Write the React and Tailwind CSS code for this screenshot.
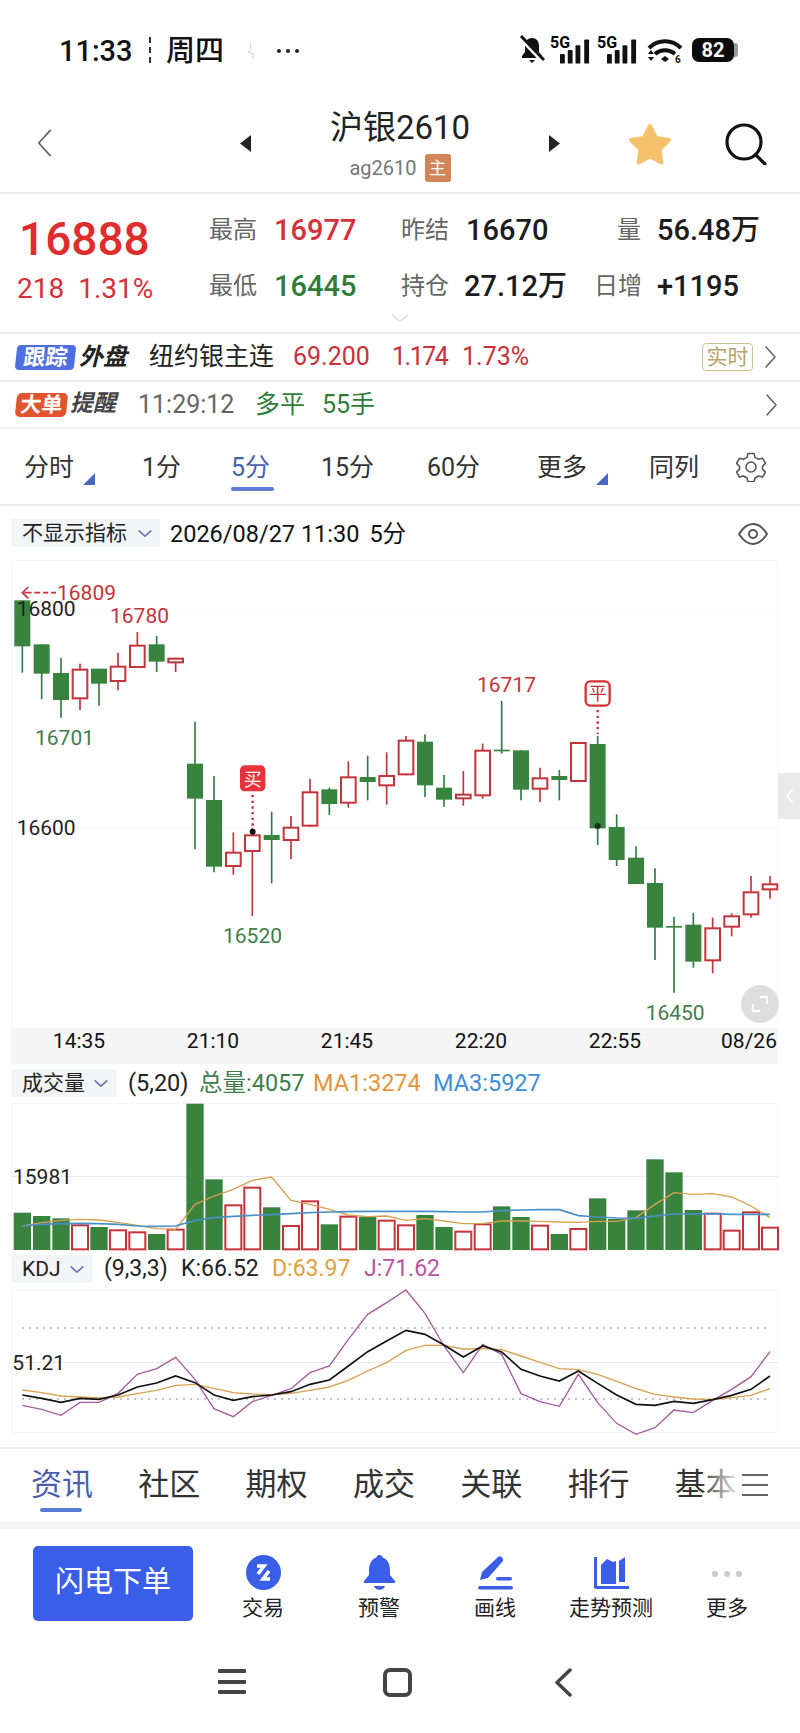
import React from 'react';

const RED = '#c2333a';
const GREEN = '#38843f';

// chart data is in 3x reference pixels: [centerX, up, bodyTop, bodyBottom, wickTop, wickBottom]
const candles = [
  [64, 0, 118, 256, 118, 335], [122, 0, 250, 338, 250, 415], [180, 0, 336, 417, 291, 470],
  [237, 1, 323, 415, 308, 447], [294, 0, 323, 368, 323, 434], [351, 1, 314, 363, 275, 388],
  [409, 1, 251, 321, 213, 321], [467, 0, 250, 302, 225, 333], [524, 1, 290, 307, 290, 333],
  [582, 0, 608, 713, 482, 865], [639, 0, 717, 917, 646, 934], [697, 1, 872, 918, 814, 941],
  [754, 1, 820, 873, 800, 1065], [812, 0, 822, 837, 752, 967], [870, 1, 797, 840, 765, 894],
  [927, 1, 691, 797, 653, 797], [985, 0, 685, 729, 680, 762], [1042, 1, 646, 728, 601, 740],
  [1100, 0, 648, 663, 584, 718], [1157, 1, 642, 676, 574, 731], [1215, 1, 536, 643, 525, 643],
  [1272, 0, 542, 673, 520, 708], [1329, 0, 680, 716, 642, 737], [1387, 1, 698, 715, 630, 734],
  [1445, 1, 566, 706, 548, 713], [1502, 0, 566, 571, 420, 578], [1560, 0, 568, 686, 568, 718],
  [1617, 1, 649, 686, 620, 723], [1675, 0, 645, 657, 627, 718], [1732, 1, 543, 663, 543, 663],
  [1790, 0, 549, 802, 525, 852], [1847, 0, 798, 897, 760, 915], [1905, 0, 890, 969, 856, 969],
  [1962, 0, 966, 1100, 922, 1197], [2019, 0, 1095, 1100, 1067, 1295], [2077, 0, 1091, 1202, 1056, 1220],
  [2135, 1, 1099, 1201, 1070, 1237], [2192, 1, 1063, 1100, 1057, 1126], [2250, 1, 991, 1063, 945, 1070],
  [2307, 1, 967, 988, 945, 1013],
];

const volumeTops = [
  455, 465, 472, 490, 498, 505, 511, 519, 503, 128, 355, 430, 377, 439, 492, 418, 490, 464, 467, 476,
  490, 462, 498, 509, 487, 436, 468, 491, 519, 501, 412, 474, 448, 295, 334, 447, 455, 506, 451, 497,
];

const xs = candles.map((c) => c[0]);
const line = (ys) => ys.map((y, i) => `${xs[i]},${y}`).join(' ');

const ma1 = [495, 485, 478, 475, 477, 484, 493, 503, 505, 430, 405, 385, 358, 348, 418, 430, 445, 462, 467, 465, 478, 473, 480, 488, 488, 480, 480, 481, 483, 484, 481, 481, 470, 430, 395, 400, 398, 408, 435, 470];
const ma3 = [495, 490, 488, 487, 488, 490, 495, 496, 495, 478, 470, 466, 463, 461, 458, 455, 453, 452, 451, 451, 451, 451, 452, 453, 453, 449, 447, 446, 446, 464, 468, 471, 472, 465, 459, 459, 458, 460, 460, 460];
const kLine = [1002, 1012, 1024, 1012, 1015, 1002, 978, 966, 945, 965, 1002, 1018, 1007, 1002, 992, 970, 957, 915, 872, 840, 808, 820, 852, 888, 855, 873, 925, 945, 960, 930, 967, 1002, 1030, 1033, 1021, 1027, 1016, 1003, 985, 945];
const dLine = [987, 995, 1005, 1008, 1011, 1008, 998, 988, 973, 970, 982, 995, 999, 1001, 997, 988, 978, 958, 930, 905, 868, 853, 853, 864, 863, 866, 885, 904, 923, 926, 940, 961, 983, 1000, 1008, 1014, 1016, 1010, 1003, 983];
const jLine = [1033, 1045, 1063, 1024, 1024, 997, 940, 923, 889, 955, 1043, 1067, 1022, 1003, 983, 935, 915, 835, 760, 725, 687, 757, 855, 935, 850, 880, 998, 1022, 1036, 940, 1025, 1087, 1120, 1100, 1047, 1055, 1018, 985, 947, 872];

function Chevron({ className = '', dir = 'right', color = '#555', w = 2 }) {
  const d = { right: 'M3 2l9 10-9 10', left: 'M12 2L3 12l9 10', down: 'M2 3l10 9 10-9' }[dir];
  return (
    <svg viewBox={dir === 'down' ? '0 0 24 15' : '0 0 15 24'} className={className} fill="none" stroke={color} strokeWidth={w} strokeLinecap="round" strokeLinejoin="round">
      <path d={d} />
    </svg>
  );
}

function Signal() {
  return (
    <div className="relative w-[41px] h-[28px]">
      <span className="absolute left-0 top-0 text-[16px] leading-[13px] font-bold text-black">5G</span>
      <svg viewBox="0 0 32 25" className="absolute right-0 top-[3px] w-[31px] h-[25px]" fill="#111">
        <rect x="0" y="15" width="5" height="10" rx="1" />
        <rect x="8" y="11" width="5" height="14" rx="1" />
        <rect x="16" y="6" width="5" height="19" rx="1" />
        <rect x="25" y="0" width="5" height="25" rx="1" />
      </svg>
    </div>
  );
}

function StatusBar() {
  return (
    <div className="h-[96px] shrink-0 flex items-start pt-[33px] pl-[59px]">
      <span className="w-[74px] text-[29px] leading-[36px] font-medium text-[#111] whitespace-nowrap">11:33</span>
      <span className="ml-[16px] mt-[4px] h-[26px] border-l-2 border-dashed border-[#333]" />
      <span className="ml-[15px] w-[58px] text-[29px] leading-[36px] font-medium text-[#111] whitespace-nowrap">周四</span>
      <svg viewBox="0 0 16 20" className="ml-[19px] mt-[8px] w-[16px] h-[20px]" fill="none" stroke="#c6d3e6" strokeWidth="1">
        <path d="M7 2l1 6-3 3 6 2-2 5" />
      </svg>
      <span className="ml-[18px] mt-[16px] flex gap-[5px]">
        <i className="w-[4px] h-[4px] rounded-full bg-[#222]" />
        <i className="w-[4px] h-[4px] rounded-full bg-[#222]" />
        <i className="w-[4px] h-[4px] rounded-full bg-[#222]" />
      </span>
      <svg viewBox="0 0 26 28" className="ml-[220px] w-[26px] h-[28px] mt-[2px]" fill="#111">
        <path d="M13 3c-5 0-7 4-7 8v6l-3 4v2h20v-2l-3-4v-6c0-4-2-8-7-8z" />
        <path d="M10 25h6l-3 3z" />
        <path d="M1 2l23 24" stroke="#fff" strokeWidth="5" />
        <path d="M2 1l23 24" stroke="#111" strokeWidth="3" />
      </svg>
      <div className="ml-[5px] mt-[3px]"><Signal /></div>
      <div className="ml-[6px] mt-[3px]"><Signal /></div>
      <svg viewBox="0 0 36 24" className="ml-[9px] mt-[6px] w-[36px] h-[24px]" fill="none">
        <path d="M2 9c9-9 23-9 32 0" stroke="#111" strokeWidth="4" />
        <path d="M8 15c6-5 14-5 20 0" stroke="#111" strokeWidth="4" />
        <path d="M14 20l4-3 4 3-4 3z" fill="#111" />
        <path d="M1 15l3-4 3 4zM1 18l3 4 3-4z" fill="#111" />
        <text x="28" y="24" fontSize="10" fontWeight="700" fill="#111">6</text>
      </svg>
      <div className="ml-[9px] mt-[5px] flex items-center">
        <span className="w-[42px] h-[24px] rounded-[7px] bg-[#0c0c0c] text-white text-[20px] leading-[24px] font-bold text-center">82</span>
        <span className="w-[4px] h-[14px] rounded-r-[3px] bg-[#9a9a9a]" />
      </div>
    </div>
  );
}

function Header() {
  return (
    <div className="h-[98px] shrink-0 border-b-2 border-[#eeeeee] flex items-start relative">
      <Chevron dir="left" color="#666" w={1.4} className="absolute left-[35px] top-[31px] w-[19px] h-[32px]" />
      <svg viewBox="0 0 11 17" className="absolute left-[240px] top-[39px] w-[11px] h-[17px]" fill="#222"><path d="M11 0v17L0 8.5z" /></svg>
      <div className="mx-auto flex flex-col items-center">
        <span className="text-[33px] leading-[40px] mt-[12px] text-[#222] whitespace-nowrap">沪银2610</span>
        <div className="flex items-center mt-[6px] ml-[0px]">
          <span className="text-[20px] leading-[28px] text-[#777]">ag2610</span>
          <span className="ml-[8px] w-[26px] h-[28px] rounded-[3px] bg-[#d2845a] text-white text-[17px] leading-[28px] text-center">主</span>
        </div>
      </div>
      <svg viewBox="0 0 11 17" className="absolute left-[549px] top-[39px] w-[11px] h-[17px]" fill="#222"><path d="M0 0v17l11-8.5z" /></svg>
      <svg viewBox="0 0 44 44" className="absolute left-[628px] top-[26px] w-[44px] h-[44px]" fill="#f5c26b" stroke="#f5c26b" strokeWidth="4" strokeLinejoin="round">
        <path d="M22 4l6 12 13 2-9.500 9.500 2 13-11.500-6-11.500 6 2-13L3 18l13-2z" />
      </svg>
      <svg viewBox="0 0 44 42" className="absolute left-[724px] top-[27px] w-[44px] h-[42px]" fill="none" stroke="#111" strokeWidth="3.200" strokeLinecap="round">
        <circle cx="20" cy="19" r="17" />
        <path d="M32 32l9 9" />
      </svg>
    </div>
  );
}

function Stat({ label, value, color, labelW = 49, gap = 16, right }) {
  return (
    <div className="flex items-center">
      <span style={{ width: labelW }} className={`text-[24px] leading-[30px] text-[#666] whitespace-nowrap ${right ? 'text-right' : ''}`}>{label}</span>
      <span style={{ marginLeft: gap, color }} className="text-[29px] leading-[30px] font-medium whitespace-nowrap">{value}</span>
    </div>
  );
}

function Quote() {
  return (
    <div className="h-[140px] shrink-0 border-b-2 border-[#eeeeee] flex relative">
      <div className="w-[209px] pl-[17px] shrink-0">
        <div className="mt-[21px] ml-[2px] text-[46px] leading-[48px] font-medium text-[#df2c2c]">16888</div>
        <div className="mt-[11px] text-[28px] leading-[30px] text-[#d6303a] whitespace-nowrap">218<span className="ml-[14px]">1.31%</span></div>
      </div>
      <div className="grid grid-cols-[192px_193px_200px] grid-rows-[57px_52px] pt-[7px]">
        <Stat label="最高" value="16977" color="#d6303a" />
        <Stat label="昨结" value="16670" color="#1c1c1c" labelW={48} gap={17} />
        <Stat label="量" value="56.48万" color="#1c1c1c" labelW={47} right />
        <div className="col-span-3 grid grid-cols-[192px_193px_200px] pt-[3px]">
          <Stat label="最低" value="16445" color="#2e7d3a" />
          <Stat label="持仓" value="27.12万" color="#1c1c1c" labelW={48} gap={15} />
          <Stat label="日增" value="+1195" color="#1c1c1c" labelW={47} right />
        </div>
      </div>
      <Chevron dir="down" color="#d8d8d8" w={1.600} className="absolute left-[389px] top-[119px] w-[22px] h-[11px]" />
    </div>
  );
}

function Rows() {
  return (
    <>
      <div className="h-[48px] shrink-0 border-b-2 border-[#eeeeee] flex items-center pl-[16px] text-[25px] whitespace-nowrap">
        <span className="w-[59px] h-[25px] -skew-x-6 rounded-[4px] bg-[#4d6fe0] text-white text-[22px] leading-[25px] font-bold text-center">跟踪</span>
        <span className="ml-[4px] w-[49px] text-[24px] font-bold italic text-[#222]">外盘</span>
        <span className="ml-[21px] w-[125px] text-[#222]">纽约银主连</span>
        <span className="ml-[19px] w-[79px] text-[#c9303a]">69.200</span>
        <span className="ml-[20px] w-[51px] tracking-[-1.500px] text-[#c9303a]">1.174</span>
        <span className="ml-[19px] w-[66px] text-[#c9303a]">1.73%</span>
        <span className="ml-[174px] w-[51px] h-[28px] rounded-[4px] border border-[#cdbf95] text-[#b8a36a] text-[21px] leading-[26px] text-center">实时</span>
        <Chevron color="#666" w={1.600} className="ml-[10px] w-[15px] h-[24px]" />
      </div>
      <div className="h-[47px] shrink-0 border-b-2 border-[#eeeeee] flex items-center pl-[16px] text-[25px] whitespace-nowrap">
        <span className="w-[51px] h-[24px] -skew-x-6 rounded-[5px] bg-[#e0552f] text-white text-[21px] leading-[24px] font-bold text-center">大单</span>
        <span className="ml-[3px] w-[48px] text-[23px] font-bold italic text-[#444]">提醒</span>
        <span className="ml-[20px] w-[98px] text-[#666]">11:29:12</span>
        <span className="ml-[19px] w-[50px] text-[#2e7d3a]">多平</span>
        <span className="ml-[17px] w-[55px] text-[#2e7d3a]">55手</span>
        <Chevron color="#666" w={1.600} className="ml-[387px] w-[15px] h-[24px]" />
      </div>
    </>
  );
}

function Corner() {
  return <span className="absolute left-[59px] top-[21px] w-0 h-0 border-l-[12px] border-l-transparent border-b-[12px] border-b-[#4a67c4]" />;
}

function Tabs() {
  return (
    <div className="h-[77px] shrink-0 border-b-2 border-[#eeeeee] flex items-start pl-[24px] pt-[23px] text-[25px] leading-[32px] text-[#333] whitespace-nowrap">
      <span className="w-[118px] relative">分时<Corner /></span>
      <span className="w-[89px]">1分</span>
      <span className="w-[90px] relative text-[#4a5fb0]">
        5分
        <i className="absolute left-0 top-[35px] w-[43px] h-[4px] rounded-[2px] bg-[#5b7bd5]" />
      </span>
      <span className="w-[106px]">15分</span>
      <span className="w-[110px]">60分</span>
      <span className="w-[112px] relative">更多<Corner /></span>
      <span className="w-[87px]">同列</span>
      <svg viewBox="0 0 30 30" className="w-[30px] h-[30px]" fill="none" stroke="#555" strokeWidth="1.600" strokeLinejoin="round">
        <path d="M12 2h6l1 4 3.500 2 4-1 3 5-3 3v3l3 3-3 5-4-1-3.500 2-1 4h-6l-1-4-3.500-2-4 1-3-5 3-3v-3l-3-3 3-5 4 1L11 6z" transform="translate(0 -.500) scale(1 .98)" />
        <circle cx="15" cy="15" r="5" />
      </svg>
    </div>
  );
}

function CandleChart() {
  return (
    <div className="relative h-[468px] w-[767px] ml-[11px] border-x border-t border-[#f6f6f6]">
      <svg viewBox="33 0 2301 1404" className="block w-[767px] h-[468px] overflow-visible" fontSize="63">
        <line x1="33" x2="2334" y1="147" y2="147" stroke="#f8f8f8" strokeWidth="3" />
        <line x1="33" x2="2334" y1="802" y2="802" stroke="#f8f8f8" strokeWidth="3" />
        {candles.map(([x, up, t, b, wt, wb]) => (
          <g key={x}>
            <line x1={x} x2={x} y1={wt} y2={wb} stroke={up ? RED : '#2f7d46'} strokeWidth="5" />
            {up ? (
              <rect x={x - 22} y={t + 3} width="44" height={Math.max(b - t - 6, 4)} fill="#fff" stroke={RED} strokeWidth="6" />
            ) : (
              <rect x={x - 24} y={t} width="48" height={b - t} fill={GREEN} />
            )}
          </g>
        ))}
        <path d="M82 78L64 95l18 17M70 95h95" fill="none" stroke={RED} strokeWidth="5" />
        <rect x="92" y="85" width="8" height="20" fill="#fff" /><rect x="118" y="85" width="8" height="20" fill="#fff" /><rect x="142" y="85" width="8" height="20" fill="#fff" />
        <text x="168" y="116" fill={RED}>16809</text>
        <text x="47" y="164" fill="#222">16800</text>
        <text x="327" y="187" fill={RED}>16780</text>
        <text x="102" y="552" fill="#3f7d4c">16701</text>
        <text x="47" y="822" fill="#222">16600</text>
        <text x="666" y="1147" fill="#3f7d4c">16520</text>
        <text x="1428" y="393" fill={RED}>16717</text>
        <text x="1934" y="1376" fill="#3f7d4c">16450</text>

        <rect x="717" y="613" width="76" height="78" rx="14" fill="#e8333c" />
        <text x="755" y="674" fontSize="54" fill="#fff" textAnchor="middle">买</text>
        <line x1="755" x2="755" y1="702" y2="806" stroke={RED} strokeWidth="7" strokeDasharray="7 10" />
        <circle cx="755" cy="812" r="9" fill="#111" />

        <rect x="1754" y="361" width="72" height="73" rx="14" fill="#fff" stroke="#d6303a" strokeWidth="7" />
        <text x="1790" y="418" fontSize="54" fill={RED} textAnchor="middle">平</text>
        <line x1="1790" x2="1790" y1="447" y2="520" stroke={RED} strokeWidth="7" strokeDasharray="7 10" />
        <circle cx="1790" cy="795" r="9" fill="#17331d" />
      </svg>
      <div className="absolute left-[766px] top-[212px] w-[22px] h-[46px] bg-[#e9e9e9] flex items-center justify-center">
        <Chevron dir="left" color="#fff" w={3} className="w-[9px] h-[14px]" />
      </div>
      <div className="absolute left-[729px] top-[424px] w-[38px] h-[38px] rounded-full bg-[#dedede] flex items-center justify-center">
        <svg viewBox="0 0 18 18" className="w-[18px] h-[18px]" fill="none" stroke="#fff" strokeWidth="2">
          <path d="M9 2h7v7M2 9v7h7" />
        </svg>
      </div>
    </div>
  );
}

function TimeAxis() {
  return (
    <div className="h-[36px] w-[767px] ml-[11px] shrink-0 bg-[#f5f5f5] pl-[1px] grid grid-cols-[repeat(6,134px)] text-[21px] leading-[26px] text-[#111] text-center whitespace-nowrap">
      <span>14:35</span><span>21:10</span><span>21:45</span><span>22:20</span><span>22:55</span><span>08/26</span>
    </div>
  );
}

function IndicatorBtn({ label, w, textW }) {
  return (
    <div style={{ width: w }} className="h-[28px] ml-[11px] shrink-0 bg-[#f3f4f6] rounded-[2px] flex items-center pl-[11px]">
      <span style={{ width: textW }} className="text-[21px] leading-[28px] text-[#222] whitespace-nowrap">{label}</span>
      <Chevron dir="down" color="#6672b5" w={2.600} className="ml-[10px] w-[14px] h-[9px]" />
    </div>
  );
}

function VolumeChart() {
  return (
    <div className="h-[147px] w-[767px] ml-[11px] shrink-0 border-x border-t border-[#f6f6f6]">
      <svg viewBox="33 129 2301 441" className="block w-[767px] h-[147px] overflow-visible" fontSize="63">
        <line x1="33" x2="2334" y1="346" y2="346" stroke="#e8e8e8" strokeWidth="3" />
        <text x="36" y="369" fill="#222">15981</text>
        {candles.map(([x, up], i) =>
          up ? (
            <rect key={x} x={x - 24} y={volumeTops[i] + 3} width="48" height={565 - volumeTops[i] - 3} fill="#fff" stroke={RED} strokeWidth="6" />
          ) : (
            <rect key={x} x={x - 26} y={volumeTops[i]} width="52" height={567 - volumeTops[i]} fill={GREEN} />
          )
        )}
        <polyline points={line(ma1)} fill="none" stroke="#d9a050" strokeWidth="4" />
        <polyline points={line(ma3)} fill="none" stroke="#4a90c8" strokeWidth="5" />
      </svg>
    </div>
  );
}

function KdjChart() {
  return (
    <div className="h-[143px] mb-[14px] w-[767px] ml-[11px] shrink-0 border border-[#f6f6f6]">
      <svg viewBox="33 690 2301 429" className="block w-[767px] h-[143px] overflow-visible" fontSize="63">
        <line x1="64" x2="2300" y1="801" y2="801" stroke="#888" strokeWidth="4" strokeDasharray="4 17" />
        <line x1="64" x2="2300" y1="1014" y2="1014" stroke="#888" strokeWidth="4" strokeDasharray="4 17" />
        <line x1="33" x2="2334" y1="905" y2="905" stroke="#e8e8e8" strokeWidth="3" />
        <text x="34" y="928" fill="#222">51.21</text>
        <polyline points={line(dLine)} fill="none" stroke="#d9a050" strokeWidth="4" />
        <polyline points={line(jLine)} fill="none" stroke="#a45c9c" strokeWidth="4" />
        <polyline points={line(kLine)} fill="none" stroke="#111" strokeWidth="5" />
      </svg>
    </div>
  );
}

function BottomTabs() {
  const items = ['资讯', '社区', '期权', '成交', '关联', '排行', '基本'];
  return (
    <div className="h-[75px] shrink-0 border-t-2 border-[#eeeeee] flex pl-[31px] pt-[18px] relative text-[31px] leading-[36px] text-[#333] whitespace-nowrap">
      {items.map((t, i) => (
        <span key={t} className={`w-[107.300px] relative ${i === 0 ? 'text-[#4a5fb0]' : ''}`}>
          {t}
          {i === 0 && <i className="absolute left-[9px] top-[41px] w-[42px] h-[4px] rounded-[2px] bg-[#5b7bd5]" />}
        </span>
      ))}
      <div className="absolute left-[700px] top-[10px] w-[42px] h-[56px] bg-gradient-to-r from-white/0 to-white" />
      <div className="absolute left-[742px] top-0 w-[58px] h-[70px] bg-white" />
      <svg viewBox="0 0 26 22" className="absolute left-[742px] top-[25px] w-[26px] h-[22px]" fill="none" stroke="#666" strokeWidth="2">
        <path d="M0 1h26M0 11h26M0 21h26" />
      </svg>
    </div>
  );
}

const BLUE = '#3b5ee8';

function ActionIcon({ type }) {
  if (type === 'trade') {
    return (
      <svg viewBox="0 0 35 35" className="w-[35px] h-[35px]">
        <circle cx="17.500" cy="17.500" r="17.500" fill={BLUE} />
        <path d="M11 11h7l-6 8M24 24h-7l6-8" fill="none" stroke="#fff" strokeWidth="3.500" />
      </svg>
    );
  }
  if (type === 'bell') {
    return (
      <svg viewBox="0 0 33 35" className="w-[33px] h-[35px]" fill={BLUE}>
        <circle cx="16.500" cy="3" r="3" />
        <path d="M16.500 2C9 2 6 9 6 15v5l-5 6v2h31v-2l-5-6v-5c0-6-3-13-10.500-13z" />
        <path d="M11 31h11c-1 5-10 5-11 0z" />
      </svg>
    );
  }
  if (type === 'pen') {
    return (
      <svg viewBox="0 0 35 35" className="w-[35px] h-[35px]" fill={BLUE}>
        <path d="M2 25l2-8L20 2c2-2 6 1 5 4L10 23z" />
        <rect x="18" y="22" width="16" height="3.500" rx="1.700" />
        <rect x="0" y="31" width="35" height="3.500" rx="1.700" />
      </svg>
    );
  }
  if (type === 'trend') {
    return (
      <svg viewBox="0 0 35 35" className="w-[35px] h-[35px]" fill={BLUE}>
        <path d="M0 2h3v29h32v3H1.500L0 33z" />
        <path d="M7 10l6-6 6 3 3-1v23H7zM25 6l6-4v25h-6z" />
      </svg>
    );
  }
  return (
    <div className="h-[35px] flex items-center gap-[6px] pt-[2px]">
      <i className="w-[6px] h-[6px] rounded-full bg-[#cccccc]" />
      <i className="w-[6px] h-[6px] rounded-full bg-[#cccccc]" />
      <i className="w-[6px] h-[6px] rounded-full bg-[#cccccc]" />
    </div>
  );
}

function ActionBar() {
  const items = [['trade', '交易'], ['bell', '预警'], ['pen', '画线'], ['trend', '走势预测'], ['more', '更多']];
  return (
    <>
      <div className="h-[7px] shrink-0 bg-[#f5f5f5]" />
      <div className="h-[111px] shrink-0 flex items-start pt-[17px] pl-[33px]">
        <div className="w-[160px] h-[75px] rounded-[5px] bg-[#3b5ee8] text-white text-[29px] leading-[73px] text-center whitespace-nowrap">闪电下单</div>
        <div className="ml-[12px] grid grid-cols-[repeat(5,116px)]">
          {items.map(([type, label]) => (
            <div key={label} className="flex flex-col items-center pt-[9px]">
              <ActionIcon type={type} />
              <span className="mt-[4px] text-[21px] leading-[28px] text-[#222] whitespace-nowrap">{label}</span>
            </div>
          ))}
        </div>
      </div>
    </>
  );
}

function NavBar() {
  return (
    <div className="flex items-start pl-[218px] pt-[28px]">
      <div className="w-[28px] h-[27px] flex flex-col justify-between py-[1px]">
        <i className="h-[4px] rounded-[1px] bg-[#444]" />
        <i className="h-[4px] rounded-[1px] bg-[#444]" />
        <i className="h-[4px] rounded-[1px] bg-[#444]" />
      </div>
      <div className="ml-[137px] w-[29px] h-[29px] rounded-[7px] border-[4px] border-[#444]" />
      <svg viewBox="0 0 17 29" className="ml-[143px] w-[17px] h-[29px]" fill="none" stroke="#444" strokeWidth="3.500" strokeLinecap="round" strokeLinejoin="round">
        <path d="M15 2L2 14.500 15 27" />
      </svg>
    </div>
  );
}

export default function App() {
  return (
    <div className="w-[800px] h-[1733px] bg-white overflow-hidden flex flex-col [font-family:Roboto,'Noto_Sans_CJK_SC',sans-serif]">
      <StatusBar />
      <Header />
      <Quote />
      <Rows />
      <Tabs />

      <div className="h-[54px] shrink-0 flex items-start pt-[13px]">
        <IndicatorBtn label="不显示指标" w={149} textW={106} />
        <span className="ml-[10px] mt-[1px] text-[23.500px] leading-[28px] text-[#111] whitespace-nowrap">2026/08/27 11:30<span className="ml-[10px]">5分</span></span>
        <svg viewBox="0 0 30 22" className="ml-auto mr-[32px] mt-[4px] w-[30px] h-[22px]" fill="none" stroke="#555" strokeWidth="2">
          <path d="M1 11C6 3 11 1 15 1s9 2 14 10c-5 8-10 10-14 10S6 19 1 11z" />
          <circle cx="15" cy="11" r="4" />
        </svg>
      </div>

      <CandleChart />
      <TimeAxis />

      <div className="h-[39px] shrink-0 flex items-start pt-[5px] text-[23.500px] leading-[28px] whitespace-nowrap">
        <IndicatorBtn label="成交量" w={106} textW={62} />
        <span className="ml-[11px] w-[59px] text-[#222]">(5,20)</span>
        <span className="ml-[12px] w-[102px] text-[#3f7d4c]">总量:4057</span>
        <span className="ml-[12px] w-[108px] text-[#e2953c]">MA1:3274</span>
        <span className="ml-[12px] text-[#3f8ed6]">MA3:5927</span>
      </div>
      <VolumeChart />

      <div className="h-[40px] shrink-0 flex items-start pt-[5px] text-[23px] leading-[28px] whitespace-nowrap">
        <IndicatorBtn label="KDJ" w={82} textW={38} />
        <span className="ml-[11px] w-[65px] text-[#222]">(9,3,3)</span>
        <span className="ml-[12px] w-[79px] text-[#222]">K:66.52</span>
        <span className="ml-[12px] w-[80px] text-[#e2a03c]">D:63.97</span>
        <span className="ml-[12px] text-[#b9549f]">J:71.62</span>
      </div>
      <KdjChart />

      <BottomTabs />
      <ActionBar />
      <NavBar />
    </div>
  );
}
